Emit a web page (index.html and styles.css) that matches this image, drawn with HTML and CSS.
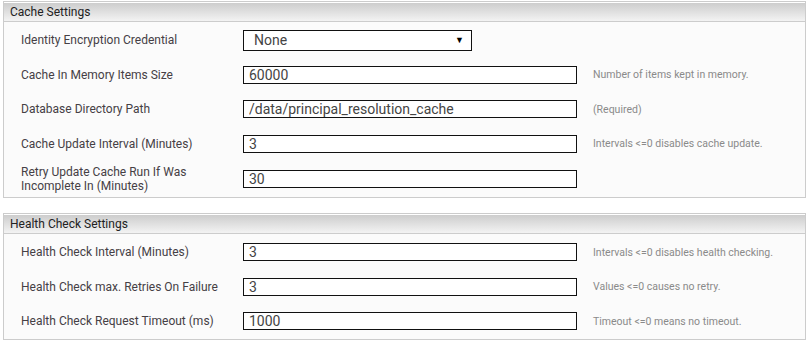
FILE: index.html
```html
<!DOCTYPE html>
<html lang="en">

<head>
    <meta charset="UTF-8">
    <meta name="viewport" content="width=device-width, initial-scale=1.0">
    <link rel="stylesheet" href="styles.css">
    <title>Principal Resolution Settings</title>
</head>

<body>
    <div class="panel">
        <div class="panel-header">Cache Settings</div>
        <div class="panel-body">
            <div class="row">
                <label class="label">Identity Encryption Credential</label>
                <div class="select">
                    <span>None</span>
                    <span class="arrow">&#9660;</span>
                </div>
                <span class="hint"></span>
            </div>
            <div class="row">
                <label class="label">Cache In Memory Items Size</label>
                <input type="text" class="field" value="60000">
                <span class="hint">Number of items kept in memory.</span>
            </div>
            <div class="row">
                <label class="label">Database Directory Path</label>
                <input type="text" class="field" value="/data/principal_resolution_cache">
                <span class="hint">(Required)</span>
            </div>
            <div class="row">
                <label class="label">Cache Update Interval (Minutes)</label>
                <input type="text" class="field" value="3">
                <span class="hint">Intervals &lt;=0 disables cache update.</span>
            </div>
            <div class="row row-tall">
                <label class="label">Retry Update Cache Run If Was Incomplete In (Minutes)</label>
                <input type="text" class="field" value="30">
                <span class="hint"></span>
            </div>
        </div>
    </div>

    <div class="panel">
        <div class="panel-header">Health Check Settings</div>
        <div class="panel-body">
            <div class="row">
                <label class="label">Health Check Interval (Minutes)</label>
                <input type="text" class="field" value="3">
                <span class="hint">Intervals &lt;=0 disables health checking.</span>
            </div>
            <div class="row">
                <label class="label">Health Check max. Retries On Failure</label>
                <input type="text" class="field" value="3">
                <span class="hint">Values &lt;=0 causes no retry.</span>
            </div>
            <div class="row">
                <label class="label">Health Check Request Timeout (ms)</label>
                <input type="text" class="field" value="1000">
                <span class="hint">Timeout &lt;=0 means no timeout.</span>
            </div>
        </div>
    </div>
</body>

</html>
```

FILE: styles.css
```css
/* General */
body {
    font-family: Roboto, 'Liberation Sans', sans-serif;
    background-color: #ffffff;
    color: #333;
    margin: 0;
    padding: 1px 4px 0 3px;
}

.panel {
    border: 1px solid #cccccc;
    background: #fbfbfb;
    margin-bottom: 15px;
}

.panel-header {
    height: 18px;
    line-height: 18px;
    padding-left: 6px;
    font-size: 12px;
    color: #222;
    border-top: 1px solid #ffffff;
    border-bottom: 1px solid #cccccc;
    background: linear-gradient(to bottom, #cdcdcd 0%, #dedede 45%, #f3f3f3 100%);
}

.panel-body {
    padding: 1px 0 0 17px;
}

.row {
    display: grid;
    grid-template-columns: 206px 334px auto;
    column-gap: 16px;
    align-items: center;
    min-height: 34.5px;
}

.row-tall {
    min-height: 36px;
}

.label {
    font-size: 12px;
    line-height: 14px;
    color: #454045;
}

.field {
    box-sizing: border-box;
    width: 334px;
    height: 18px;
    margin: 0;
    padding: 0 5px;
    border: 1px solid #111;
    background: #ffffff;
    font-family: Roboto, 'Liberation Sans', sans-serif;
    font-size: 14px;
    color: #444;
    outline: none;
}

.select {
    box-sizing: border-box;
    width: 229px;
    height: 21px;
    border: 1px solid #111;
    background: #ffffff;
    display: flex;
    align-items: center;
    justify-content: space-between;
    padding: 0 7px 0 10px;
    font-size: 14px;
    color: #444;
}

.arrow {
    font-size: 9px;
    color: #000;
}

.hint {
    font-size: 10.5px;
    color: #8a8a8a;
}
```
